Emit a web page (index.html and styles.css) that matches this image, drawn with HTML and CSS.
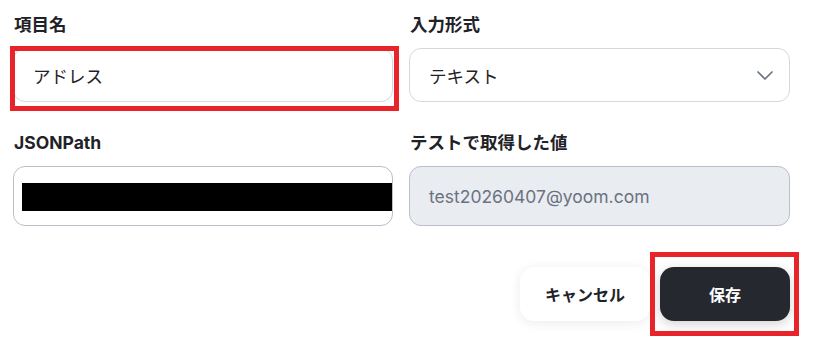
FILE: index.html
```html
<!DOCTYPE html>
<html lang="ja">
<head>
  <meta charset="UTF-8" />
  <title>項目設定</title>
  <link rel="stylesheet" href="styles.css">
</head>
<body>
  <div class="page">
    <div class="form-grid">
      <div class="field">
        <label class="field-label">項目名</label>
        <div class="input input-short">アドレス</div>
      </div>
      <div class="field">
        <label class="field-label">入力形式</label>
        <div class="input input-short select">
          <span>テキスト</span>
          <svg class="chevron" width="18" height="18" viewBox="0 0 18 18">
            <path d="M2 6 L9 13 L16 6" fill="none" stroke="#6b7280" stroke-width="1.7" stroke-linecap="round" stroke-linejoin="round"/>
          </svg>
        </div>
      </div>
      <div class="field">
        <label class="field-label">JSONPath</label>
        <div class="input input-tall path-input">
          <div class="redacted"></div>
        </div>
      </div>
      <div class="field">
        <label class="field-label">テストで取得した値</label>
        <div class="input input-tall readonly">test20260407@yoom.com</div>
      </div>
    </div>

    <div class="actions">
      <button class="btn btn-cancel">キャンセル</button>
      <button class="btn btn-save">保存</button>
    </div>

    <!-- annotation boxes -->
    <div class="mark mark-name"></div>
    <div class="mark mark-save"></div>
  </div>
</body>
</html>
```

FILE: styles.css
```css
body {
  margin: 0;
  background: #fff;
  font-family: Inter, "Noto Sans CJK JP", sans-serif;
  color: #1f2328;
}

.page {
  position: relative;
  width: 825px;
  height: 338px;
  padding: 14px 35px 0 13px;
  box-sizing: border-box;
}

.form-grid {
  display: grid;
  grid-template-columns: 380px 381px;
  column-gap: 16px;
  row-gap: 30px;
}

.field-label {
  display: block;
  font-size: 17.5px;
  font-weight: 700;
  line-height: 22px;
  margin: 0 0 12px 1px;
  color: #1f2328;
}

.input {
  display: flex;
  align-items: center;
  box-sizing: border-box;
  border: 1px solid #d3d9e1;
  border-radius: 12px;
  background: #fff;
  padding: 0 19px;
  font-size: 17.5px;
  color: #1f2328;
}

.input-short {
  height: 54px;
}
.input-tall {
  height: 60px;
  border-color: #b9bfc8;
}

.select {
  justify-content: space-between;
  padding-right: 15px;
}
.chevron {
  display: block;
}

.path-input {
  padding: 0 0 0 8px;
  align-items: flex-start;
}
.redacted {
  margin-top: 16px;
  width: 100%;
  height: 28px;
  background: #000;
}

.readonly {
  background: #e9ecf1;
  color: #6b7280;
}

.actions {
  display: flex;
  justify-content: flex-end;
  gap: 10px;
  margin-top: 41px;
}

.btn {
  width: 130px;
  height: 54px;
  border: none;
  border-radius: 14px;
  font-family: Inter, "Noto Sans CJK JP", sans-serif;
  font-size: 16px;
  font-weight: 700;
  cursor: pointer;
}
.btn-cancel {
  background: #fff;
  color: #1f2328;
  box-shadow: 0 2px 12px rgba(0, 0, 0, 0.08);
}
.btn-save {
  background: #25292f;
  color: #fff;
  box-shadow: 0 3px 12px rgba(0, 0, 0, 0.18);
}

.mark {
  position: absolute;
  border: 5px solid #e8242a;
  box-sizing: border-box;
  pointer-events: none;
}
.mark-name {
  left: 10px;
  top: 46px;
  width: 389px;
  height: 65px;
}
.mark-save {
  left: 650px;
  top: 252px;
  width: 149px;
  height: 84px;
}
```
